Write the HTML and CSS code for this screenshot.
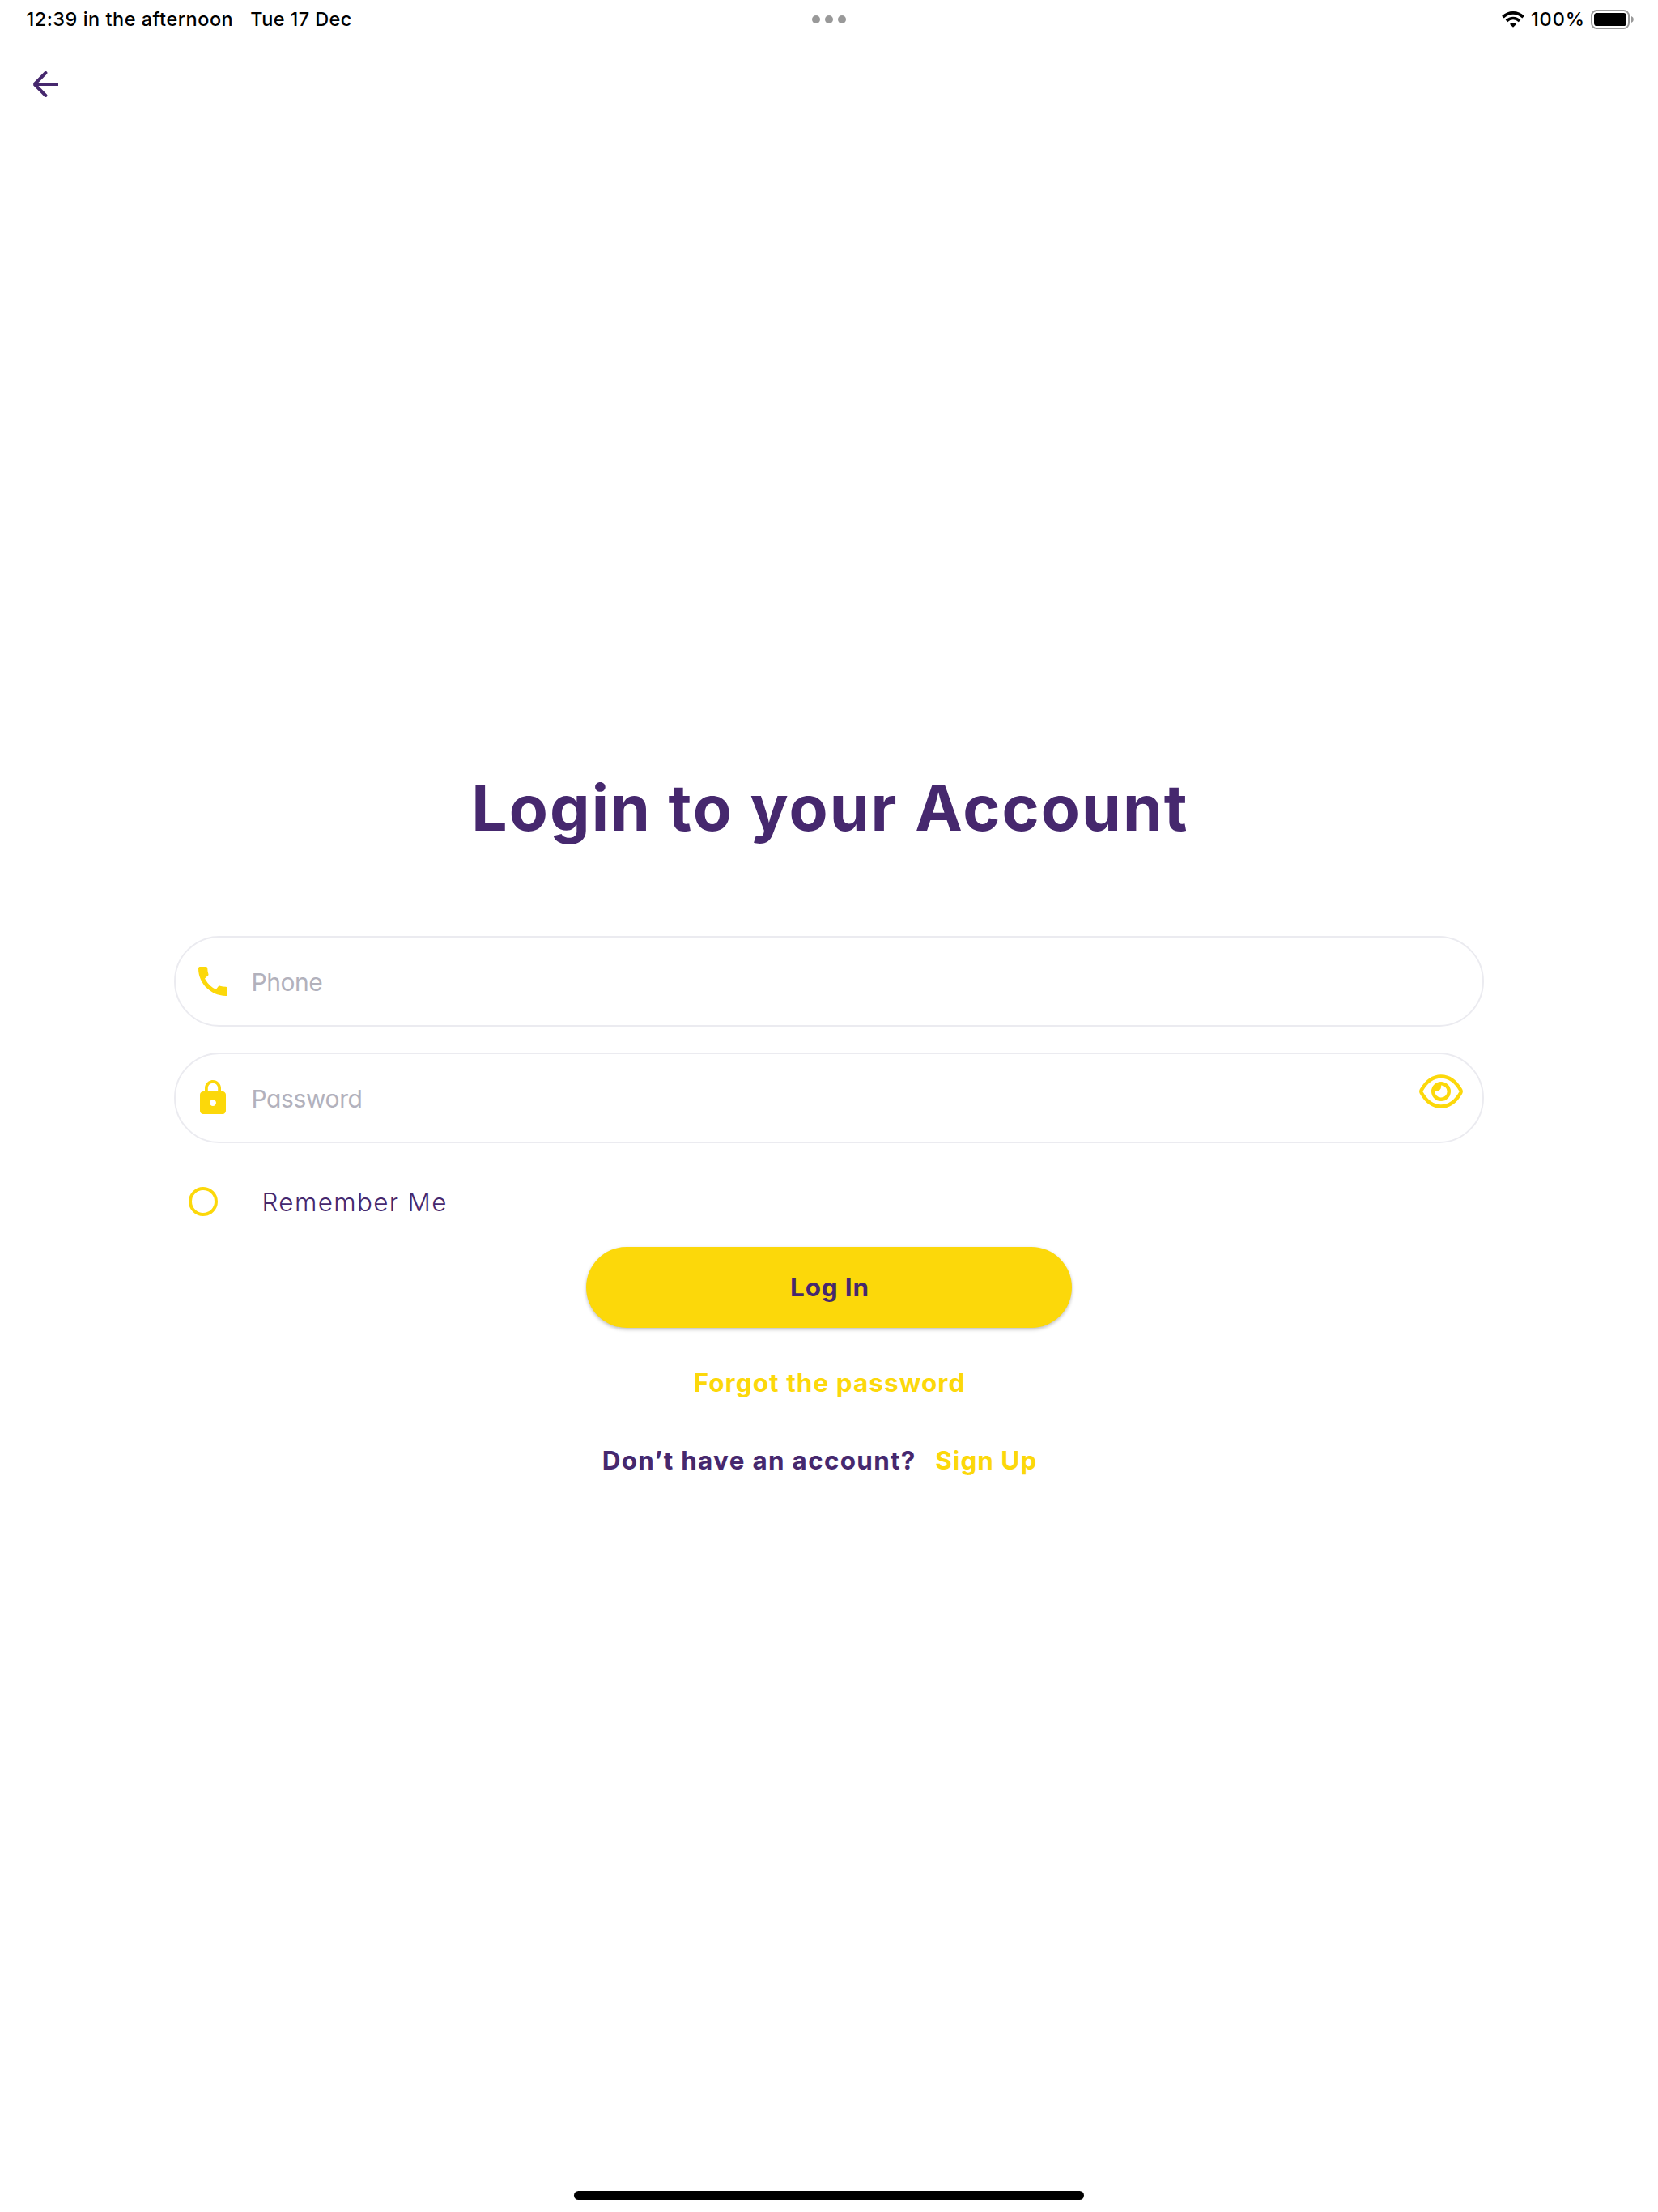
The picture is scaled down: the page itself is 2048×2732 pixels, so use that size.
FILE: index.html
```html
<!DOCTYPE html>
<html lang="en">
<head>
<meta charset="utf-8">
<title>Login</title>
<link rel="stylesheet" href="styles.css">
</head>
<body>
<div class="screen">
  <header class="status">
    <div class="status-left">
      <span class="time">12:39 in the afternoon</span>
      <span class="date">Tue 17 Dec</span>
    </div>
    <div class="dots"><i></i><i></i><i></i></div>
    <div class="status-right">
      <svg class="wifi" viewBox="0 0 28 20" width="28" height="20">
        <g fill="none" stroke="#000" stroke-width="3.7">
          <path d="M1.4 7.2 C8.6 0.2 19.4 0.2 26.6 7.2"/>
          <path d="M5.9 11.8 C10.6 7.4 17.4 7.4 22.1 11.8"/>
        </g>
        <path d="M14 19.8 L9.9 15.7 C12.2 13.6 15.8 13.6 18.1 15.7 Z"/>
      </svg>
      <span class="percent">100%</span>
      <svg class="battery" viewBox="0 0 53 24" width="53" height="24">
        <rect x="1" y="1" width="46" height="22" rx="6.5" fill="none" stroke="#999" stroke-width="2"/>
        <rect x="4" y="4" width="40" height="16" rx="3.6"/>
        <path d="M50 8 C53.7 9.2 53.7 14.8 50 16 Z" fill="#999"/>
      </svg>
    </div>
  </header>

  <nav class="nav">
    <svg viewBox="0 0 32 32" width="32" height="32" fill="none" stroke="#46286e" stroke-width="4">
      <path d="M3 16 H32"/>
      <path d="M16.4 2 L2.6 16 L16.4 30" stroke-linecap="round" stroke-linejoin="bevel"/>
    </svg>
  </nav>

  <main class="login">
    <h1 class="title">Login to your Account</h1>

    <div class="field">
      <svg viewBox="0 0 24 24" width="48" height="48" fill="#fcd80a"><path d="M20.01 15.38c-1.23 0-2.42-.2-3.53-.56-.35-.12-.74-.03-1.01.24l-1.57 1.97c-2.83-1.35-5.48-3.9-6.89-6.83l1.95-1.66c.27-.28.35-.67.24-1.02-.37-1.11-.56-2.3-.56-3.53 0-.54-.45-.99-.99-.99H4.19C3.65 3 3 3.24 3 3.99 3 13.28 10.73 21 20.01 21c.71 0 .99-.63.99-1.18v-3.45c0-.54-.45-.99-.99-.99z"/></svg>
      <span class="hint phone">Phone</span>
    </div>

    <div class="field">
      <svg viewBox="0 0 24 24" width="48" height="48" fill="#fcd80a"><path d="M18 8h-1V6c0-2.76-2.24-5-5-5S7 3.24 7 6v2H6c-1.1 0-2 .9-2 2v10c0 1.1.9 2 2 2h12c1.1 0 2-.9 2-2V10c0-1.1-.9-2-2-2zm-6 9c-1.1 0-2-.9-2-2s.9-2 2-2 2 .9 2 2-.9 2-2 2zM8.9 8V6c0-1.71 1.39-3.1 3.1-3.1s3.1 1.39 3.1 3.1v2H8.9z"/></svg>
      <span class="hint password">Password</span>
      <svg class="eye" viewBox="0 0 54 42" width="54" height="42" fill="none" stroke="#fcd80a" stroke-width="4.4">
        <path d="M2.7 19.4 C15.5 -3.2 38.5 -3.2 51.3 19.4 Q52.1 21 51.3 22.6 C38.5 45.2 15.5 45.2 2.7 22.6 Q1.9 21 2.7 19.4 Z"/>
        <circle cx="27" cy="21" r="9.8"/>
        <path d="M26.6 12 C28.6 17.5 24.5 22.6 18 20.6 C18 15.5 21.5 12 26.6 12 Z" fill="#fcd80a" stroke="none"/>
      </svg>
    </div>

    <div class="remember">
      <span class="radio"></span>
      <span class="remember-label">Remember Me</span>
    </div>

    <button class="submit" type="button">Log In</button>
    <a class="forgot">Forgot the password</a>
    <p class="signup"><span class="question">Don’t have an account?</span><a class="signup-link">Sign Up</a></p>
  </main>

  <div class="home-bar"></div>
</div>
</body>
</html>
```
FILE: styles.css
```css
* { box-sizing: border-box; }

body {
  margin: 0;
  background: #fff;
  font-family: Inter, "Liberation Sans", sans-serif;
  color: #46286e;
}

svg { display: block; flex: none; }

.screen {
  display: flex;
  flex-direction: column;
  width: 2048px;
  height: 2732px;
}

/* Status bar */
.status {
  display: grid;
  grid-template-columns: 1fr auto 1fr;
  align-items: center;
  height: 48px;
  padding: 0 30px 0 32.5px;
  font-size: 23.5px;
  font-weight: 500;
  line-height: 28px;
  color: #000;
}
.status-left { display: flex; gap: 21px; padding-bottom: 1px; }
.time { letter-spacing: 0.5px; }
.date { letter-spacing: 0.386px; }
.dots { display: flex; gap: 6px; margin-right: 2px; }
.dots i { width: 10px; height: 10px; border-radius: 50%; background: #999; }
.status-right { display: flex; align-items: center; justify-content: flex-end; }
.percent { margin: 0 7px 0 8px; padding-bottom: 1px; letter-spacing: 0.9px; }

.nav { padding: 40px 0 0 40px; }

/* Form */
.login {
  display: flex;
  flex-direction: column;
  align-items: center;
  width: 1618px;
  margin: 831px auto 0;
}
.title {
  margin: 0 0 111px;
  padding-left: 3px;
  font-size: 78.5px;
  line-height: 94px;
  font-weight: 700;
  letter-spacing: 2.072px;
}
.field {
  display: flex;
  align-items: center;
  width: 100%;
  height: 112px;
  padding: 0 22px;
  border: 2px solid #ebebf0;
  border-radius: 56px;
}
.field + .field { margin-top: 32px; }
.hint {
  margin-left: 23.5px;
  padding-top: 1px;
  font-size: 30px;
  font-weight: 400;
  font-feature-settings: "cv11";
  color: #b2b1bc;
}
.phone { letter-spacing: -0.45px; }
.password { letter-spacing: -0.4px; }
.eye { margin: 0 2px 16px auto; }

.remember {
  display: flex;
  align-items: center;
  gap: 54.5px;
  width: 100%;
  height: 56px;
  margin: 44px 0 28px;
  padding-left: 18px;
}
.radio { width: 36px; height: 36px; border: 4px solid #fcd80a; border-radius: 50%; }
.remember-label { padding-top: 2px; font-size: 31.4px; font-weight: 350; letter-spacing: 1.35px; }

.submit, .forgot, .signup {
  font-family: inherit;
  font-size: 31.4px;
  line-height: 40px;
  font-weight: 650;
}
.submit {
  width: 600px;
  height: 100px;
  padding: 0 0 0 2px;
  border: 0;
  border-radius: 50px;
  background: #fcd80a;
  box-shadow: 0 2px 4px rgba(0, 0, 0, 0.26);
  color: #46286e;
  letter-spacing: 0.9px;
}
.forgot { margin-top: 48px; padding-left: 1px; letter-spacing: 1.1px; color: #fcd80a; }
.signup { display: flex; gap: 23.5px; margin: 56px 0 0; padding-right: 23px; }
.question { letter-spacing: 1.32px; }
.signup-link { letter-spacing: 1.05px; color: #fcd80a; }

.home-bar {
  width: 630px;
  height: 11px;
  margin: auto auto 15px;
  border-radius: 6px;
  background: #000;
}
```
